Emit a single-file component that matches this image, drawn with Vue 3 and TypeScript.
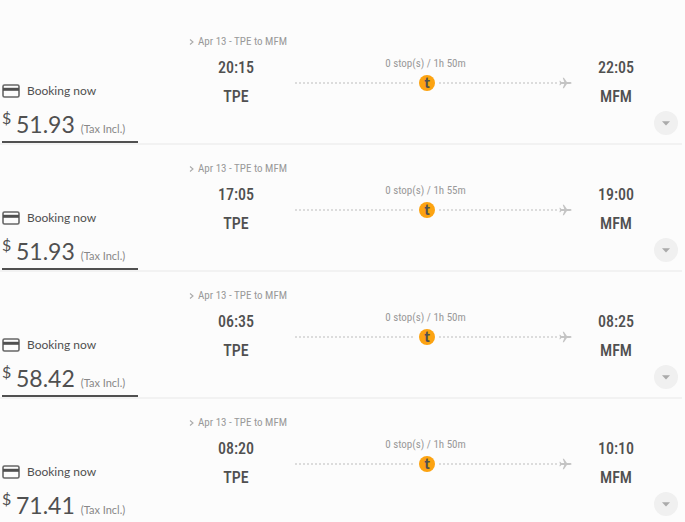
<script setup lang="ts">
interface Flight {
  date: string
  from: string
  to: string
  departs: string
  arrives: string
  duration: string
  price: string
}

const flights: Flight[] = [
  { date: 'Apr 13', from: 'TPE', to: 'MFM', departs: '20:15', arrives: '22:05', duration: '1h 50m', price: '51.93' },
  { date: 'Apr 13', from: 'TPE', to: 'MFM', departs: '17:05', arrives: '19:00', duration: '1h 55m', price: '51.93' },
  { date: 'Apr 13', from: 'TPE', to: 'MFM', departs: '06:35', arrives: '08:25', duration: '1h 50m', price: '58.42' },
  { date: 'Apr 13', from: 'TPE', to: 'MFM', departs: '08:20', arrives: '10:10', duration: '1h 50m', price: '71.41' },
]
</script>

<template>
  <main class="results">
    <article v-for="flight in flights" :key="flight.departs" class="fare">
      <section class="offer">
        <div class="booking">
          <svg class="card-icon" viewBox="0 0 18 14" aria-hidden="true">
            <rect x="1" y="1" width="16" height="12" rx="1.5" fill="none" stroke="#666" stroke-width="1.6" />
            <rect x="1" y="3.8" width="16" height="3" fill="#505050" />
          </svg>
          <span>Booking now</span>
        </div>
        <div class="price">
          <span class="currency">$</span>
          <span class="amount">{{ flight.price }}</span>
          <span class="tax">(Tax Incl.)</span>
        </div>
      </section>

      <section class="trip">
        <p class="date">
          <svg class="chevron" viewBox="0 0 5 8" aria-hidden="true">
            <path d="M1 1.5 4 4 1 6.5" fill="none" stroke="#aaa" stroke-width="1.1" />
          </svg>
          <span>{{ flight.date }} - {{ flight.from }} to {{ flight.to }}</span>
        </p>
        <div class="leg">
          <div class="stop departure">
            <span>{{ flight.departs }}</span>
            <span>{{ flight.from }}</span>
          </div>
          <div class="path">
            <span class="duration">0 stop(s) / {{ flight.duration }}</span>
            <div class="line">
              <i class="dots"></i>
              <span class="airline">t</span>
              <i class="dots"></i>
              <svg class="plane" viewBox="0 0 13 12" aria-hidden="true">
                <path d="M12.5 6c0-.6-.7-.9-1.4-.9H7.9L4.9.8H3.7l1.6 4.3H2.4L1.2 3.7H.4L1 6 .4 8.3h.8l1.2-1.4h2.9l-1.6 4.3h1.2l3-4.3h3.2c.7 0 1.4-.3 1.4-.9z" fill="#c4c4c4" />
              </svg>
            </div>
          </div>
          <div class="stop arrival">
            <span>{{ flight.arrives }}</span>
            <span>{{ flight.to }}</span>
          </div>
        </div>
      </section>

      <button class="toggle" type="button" aria-label="Show flight details">
        <svg viewBox="0 0 8 5" aria-hidden="true">
          <path d="M0 .3h8L4 4.6z" fill="#aaa" />
        </svg>
      </button>
    </article>
  </main>
</template>

<style>
body {
  margin: 0;
  background: #fcfcfc;
  overflow: hidden;
}
</style>

<style scoped>
.results {
  padding: 18px 3px 0 0;
  font-family: Lato, sans-serif;
  color: #505050;
}

.fare {
  display: grid;
  grid-template-columns: 138px 1fr 24px;
  align-items: end;
  box-sizing: border-box;
  height: 127px;
  padding-right: 4px;
  border-bottom: 2px solid #f2f2f2;
}

.offer {
  margin-left: 2px;
  border-bottom: 2px solid #505050;
}

.booking {
  display: flex;
  align-items: center;
  gap: 7px;
  font-size: 12px;
  line-height: 16px;
}

.card-icon {
  width: 18px;
  height: 14px;
}

.price {
  display: flex;
  align-items: baseline;
  height: 33px;
  margin-top: 9px;
  line-height: 32px;
  white-space: nowrap;
}

.currency {
  width: 14px;
  font-size: 16px;
  align-self: flex-start;
  line-height: 20px;
}

.amount {
  font-size: 23px;
}

.tax {
  margin-left: 6px;
  font-size: 11px;
  color: #888;
}

.trip {
  align-self: start;
  padding: 16px 6px 0 51px;
  font-family: "Roboto Condensed", Roboto, sans-serif;
}

.date {
  display: flex;
  align-items: center;
  gap: 4px;
  margin: 0;
  font-size: 11px;
  line-height: 16px;
  white-space: nowrap;
  color: #999;
}

.chevron {
  width: 5px;
  height: 8px;
}

.leg {
  display: grid;
  grid-template-columns: 94px 1fr 64px;
  column-gap: 12px;
}

.stop {
  display: flex;
  flex-direction: column;
  align-items: center;
  padding-top: 3px;
  font-size: 16px;
  font-weight: 500;
  line-height: 29px;
}

.path {
  display: flex;
  flex-direction: column;
  align-items: center;
  padding-top: 6px;
}

.duration {
  font-size: 11px;
  line-height: 16px;
  color: #999;
  margin-right: 16px;
}

.line {
  display: flex;
  align-items: center;
  align-self: stretch;
  height: 22px;
}

.dots {
  flex: 1;
  height: 2px;
  background: repeating-linear-gradient(to right, #dcdcdc 0 2px, transparent 2px 4px);
}

.airline {
  width: 16px;
  height: 16px;
  margin: 0 4px;
  border-radius: 50%;
  background: #fca311;
  color: #505050;
  font: 900 15px/14px Lato, sans-serif;
  text-align: center;
}

.plane {
  width: 13px;
  height: 12px;
}

.toggle {
  display: grid;
  place-items: center;
  width: 24px;
  height: 24px;
  margin-bottom: 8px;
  padding: 0;
  border: 0;
  border-radius: 50%;
  background: #f0f0f0;
  cursor: pointer;
}

.toggle svg {
  width: 8px;
  height: 5px;
}
</style>
